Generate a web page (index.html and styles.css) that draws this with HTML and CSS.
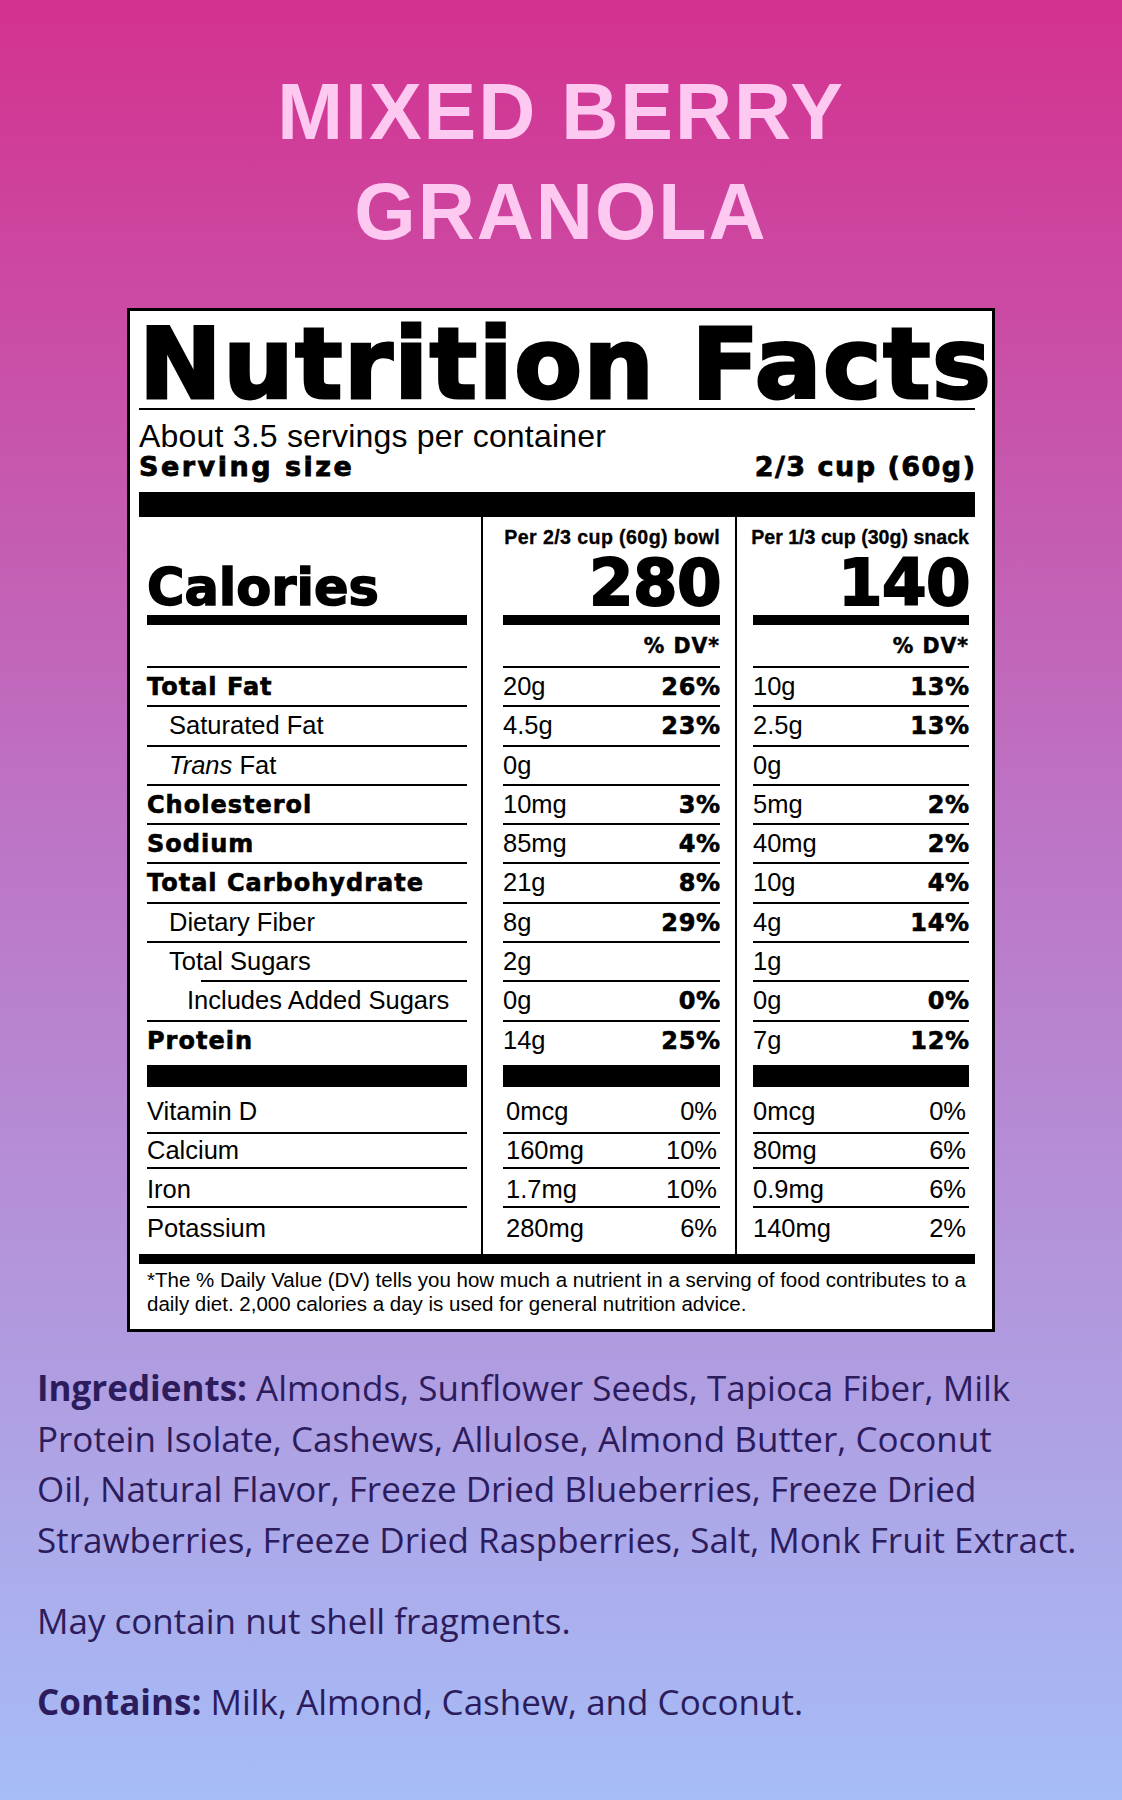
FILE: index.html
```html
<!DOCTYPE html>
<html lang="en">
<head>
<meta charset="utf-8">
<title>Mixed Berry Granola – Nutrition Facts</title>
<link rel="stylesheet" href="styles.css">
</head>
<body>
<main class="page">
  <h1 class="title">MIXED BERRY GRANOLA</h1>

  <section class="label">
    <h2 class="nf-title">Nutrition Facts</h2>
    <p class="servings">About 3.5 servings per container</p>
    <div class="serving">
      <span class="serving-label">Serving size</span>
      <span class="serving-value">2/3 cup (60g)</span>
    </div>

    <div class="facts">
      <div class="cell c1"><div class="line head"><span class="calories">Calories</span></div></div>
      <div class="cell c2"><div class="line head amt"><span class="per per-bowl">Per 2/3 cup (60g) bowl</span><span class="kcal">280</span></div></div>
      <div class="cell c3"><div class="line head amt"><span class="per">Per 1/3 cup (30g) snack</span><span class="kcal">140</span></div></div>

      <div class="cell c1"><div class="line dv"></div></div>
      <div class="cell c2"><div class="line dv"><span>% DV*</span></div></div>
      <div class="cell c3"><div class="line dv"><span>% DV*</span></div></div>

      <div class="cell c1"><div class="line"><span class="b">Total Fat</span></div></div>
      <div class="cell c2"><div class="line"><span>20g</span><span class="pct">26%</span></div></div>
      <div class="cell c3"><div class="line"><span>10g</span><span class="pct">13%</span></div></div>

      <div class="cell c1"><div class="line"><span class="ind1">Saturated Fat</span></div></div>
      <div class="cell c2"><div class="line"><span>4.5g</span><span class="pct">23%</span></div></div>
      <div class="cell c3"><div class="line"><span>2.5g</span><span class="pct">13%</span></div></div>

      <div class="cell c1"><div class="line"><span class="ind1"><i>Trans</i> Fat</span></div></div>
      <div class="cell c2"><div class="line"><span>0g</span></div></div>
      <div class="cell c3"><div class="line"><span>0g</span></div></div>

      <div class="cell c1"><div class="line"><span class="b">Cholesterol</span></div></div>
      <div class="cell c2"><div class="line"><span>10mg</span><span class="pct">3%</span></div></div>
      <div class="cell c3"><div class="line"><span>5mg</span><span class="pct">2%</span></div></div>

      <div class="cell c1"><div class="line"><span class="b">Sodium</span></div></div>
      <div class="cell c2"><div class="line"><span>85mg</span><span class="pct">4%</span></div></div>
      <div class="cell c3"><div class="line"><span>40mg</span><span class="pct">2%</span></div></div>

      <div class="cell c1"><div class="line"><span class="b">Total Carbohydrate</span></div></div>
      <div class="cell c2"><div class="line"><span>21g</span><span class="pct">8%</span></div></div>
      <div class="cell c3"><div class="line"><span>10g</span><span class="pct">4%</span></div></div>

      <div class="cell c1"><div class="line"><span class="ind1">Dietary Fiber</span></div></div>
      <div class="cell c2"><div class="line"><span>8g</span><span class="pct">29%</span></div></div>
      <div class="cell c3"><div class="line"><span>4g</span><span class="pct">14%</span></div></div>

      <div class="cell c1"><div class="line short"><span class="ind1">Total Sugars</span></div></div>
      <div class="cell c2"><div class="line"><span>2g</span></div></div>
      <div class="cell c3"><div class="line"><span>1g</span></div></div>

      <div class="cell c1"><div class="line"><span class="ind2">Includes Added Sugars</span></div></div>
      <div class="cell c2"><div class="line"><span>0g</span><span class="pct">0%</span></div></div>
      <div class="cell c3"><div class="line"><span>0g</span><span class="pct">0%</span></div></div>

      <div class="cell c1"><div class="line protein"><span class="b">Protein</span></div></div>
      <div class="cell c2"><div class="line protein"><span>14g</span><span class="pct">25%</span></div></div>
      <div class="cell c3"><div class="line protein"><span>7g</span><span class="pct">12%</span></div></div>

      <div class="cell c1"><div class="line v1"><span>Vitamin D</span></div></div>
      <div class="cell c2"><div class="line v1"><span class="vv">0mcg</span><span class="vp">0%</span></div></div>
      <div class="cell c3"><div class="line v1"><span>0mcg</span><span class="vp">0%</span></div></div>

      <div class="cell c1"><div class="line v2"><span>Calcium</span></div></div>
      <div class="cell c2"><div class="line v2"><span class="vv">160mg</span><span class="vp">10%</span></div></div>
      <div class="cell c3"><div class="line v2"><span>80mg</span><span class="vp">6%</span></div></div>

      <div class="cell c1"><div class="line v3"><span>Iron</span></div></div>
      <div class="cell c2"><div class="line v3"><span class="vv">1.7mg</span><span class="vp">10%</span></div></div>
      <div class="cell c3"><div class="line v3"><span>0.9mg</span><span class="vp">6%</span></div></div>

      <div class="cell c1"><div class="line v4"><span>Potassium</span></div></div>
      <div class="cell c2"><div class="line v4"><span class="vv">280mg</span><span class="vp">6%</span></div></div>
      <div class="cell c3"><div class="line v4"><span>140mg</span><span class="vp">2%</span></div></div>
    </div>

    <p class="foot">*The % Daily Value (DV) tells you how much a nutrient in a serving of food contributes to a daily diet. 2,000 calories a day is used for general nutrition advice.</p>
  </section>

  <section class="ingredients">
    <p><strong>Ingredients:</strong> Almonds, Sunflower Seeds, Tapioca Fiber, Milk<br>Protein Isolate, Cashews, Allulose, Almond Butter, Coconut<br>Oil, Natural Flavor, Freeze Dried Blueberries, Freeze Dried<br>Strawberries, Freeze Dried Raspberries, Salt, Monk Fruit Extract.</p>
    <p>May contain nut shell fragments.</p>
    <p><strong>Contains:</strong> Milk, Almond, Cashew, and Coconut.</p>
  </section>
</main>
</body>
</html>
```

FILE: styles.css
```css
html, body {
  margin: 0;
  padding: 0;
}

.page {
  box-sizing: border-box;
  min-height: 1800px;
  padding-top: 62px;
  background: linear-gradient(180deg, #d3328f 0%, #bd73c4 45%, #a6bdf7 100%);
}

.title {
  margin: 0 auto;
  max-width: 640px;
  font: 700 79px/100px "Liberation Sans", Arial, sans-serif;
  letter-spacing: 2px;
  color: #fdc9f0;
  text-align: center;
}

.label {
  box-sizing: border-box;
  width: 868px;
  margin: 46px auto 0;
  padding: 8px 17px 0 9px;
  background: #fff;
  border: 3px solid #000;
  color: #000;
}

.nf-title {
  margin: 0;
  font: 700 98.8px/89px "DejaVu Sans", sans-serif;
  letter-spacing: 1.6px;
  white-space: nowrap;
  border-bottom: 2px solid #000;
  -webkit-text-stroke: 3px #000;
}

.servings {
  margin: 11px 0 0;
  font: 32px/31px "Liberation Sans", Arial, sans-serif;
  letter-spacing: 0.2px;
}

.serving {
  display: flex;
  justify-content: space-between;
  align-items: baseline;
  padding-bottom: 10px;
  border-bottom: 25px solid #000;
  font: 700 27px/30px "DejaVu Sans", sans-serif;
  -webkit-text-stroke: 0.8px #000;
}

.serving-label {
  letter-spacing: 2.5px;
}

.serving-value {
  letter-spacing: 1.5px;
  margin-right: -1.5px;
}

.facts {
  display: grid;
  grid-template-columns: 344px 254px 238px;
  border-bottom: 10px solid #000;
}

.cell {
  box-sizing: border-box;
  min-width: 0;
}

.c1 {
  padding: 0 14px 0 8px;
  border-right: 2px solid #000;
}

.c2 {
  padding: 0 15px 0 20px;
  border-right: 2px solid #000;
}

.c3 {
  padding: 0 6px 0 16px;
}

.line {
  height: 37.3px;
  display: flex;
  justify-content: space-between;
  align-items: baseline;
  border-bottom: 2px solid #000;
  font: 25.5px/36px "Liberation Sans", Arial, sans-serif;
  white-space: nowrap;
}

.line.head {
  height: 98px;
  border-bottom-width: 10px;
  align-items: flex-end;
}

.line.head.amt {
  height: 89px;
  padding-top: 9px;
  flex-direction: column;
  justify-content: flex-start;
}

.per {
  font: 700 19.6px/22px "Liberation Sans", Arial, sans-serif;
  -webkit-text-stroke: 0.3px #000;
}

.per-bowl {
  letter-spacing: 0.4px;
}

.kcal {
  margin-top: auto;
  margin-right: -1px;
  font: 700 64px/64px "DejaVu Sans", sans-serif;
  letter-spacing: -0.5px;
  -webkit-text-stroke: 2px #000;
}

.calories {
  font: 700 51px/55px "DejaVu Sans", sans-serif;
  -webkit-text-stroke: 1.5px #000;
}

.line.dv {
  height: 31px;
  padding-top: 10px;
  justify-content: flex-end;
  align-items: flex-start;
  font: 700 20.5px/23px "DejaVu Sans", sans-serif;
  letter-spacing: 1px;
  -webkit-text-stroke: 0.5px #000;
}

.b {
  padding-top: 1px;
  font: 700 24px/36px "DejaVu Sans", sans-serif;
  letter-spacing: 1px;
  -webkit-text-stroke: 0.6px #000;
}

.pct {
  font: 700 24px/36px "DejaVu Sans", sans-serif;
  letter-spacing: 0.6px;
  margin-right: -0.6px;
  -webkit-text-stroke: 0.6px #000;
}

.ind1 {
  padding-left: 22px;
}

.ind2 {
  padding-left: 40px;
}

.line.short {
  border-bottom-color: transparent;
  background-image: linear-gradient(#000, #000);
  background-repeat: no-repeat;
  background-origin: border-box;
  background-clip: border-box;
  background-size: calc(100% - 54px) 2px;
  background-position: right bottom;
}

.line.protein {
  height: 43px;
  border-bottom-width: 22px;
}

.line.v1,
.line.v2,
.line.v3,
.line.v4 {
  line-height: 32px;
}

.line.v1 {
  height: 37px;
  padding-top: 8px;
}

.line.v2 {
  height: 33px;
}

.line.v3 {
  height: 33px;
  padding-top: 4px;
}

.line.v4 {
  height: 42px;
  padding-top: 4px;
  border-bottom: none;
}

.vv {
  padding-left: 3px;
}

.vp {
  padding-right: 3px;
}

.foot {
  margin: 0;
  padding: 4px 0 13px 8px;
  font: 20.5px/24px "Liberation Sans", Arial, sans-serif;
}

.ingredients {
  margin-top: 31.5px;
  padding: 0 20px 0 37px;
  font: 35px/50.5px "Open Sans", "Liberation Sans", sans-serif;
  color: #2c1c5c;
}

.ingredients p {
  margin: 0 0 30.5px;
  white-space: nowrap;
}

.ingredients strong {
  font-weight: 700;
}
```
